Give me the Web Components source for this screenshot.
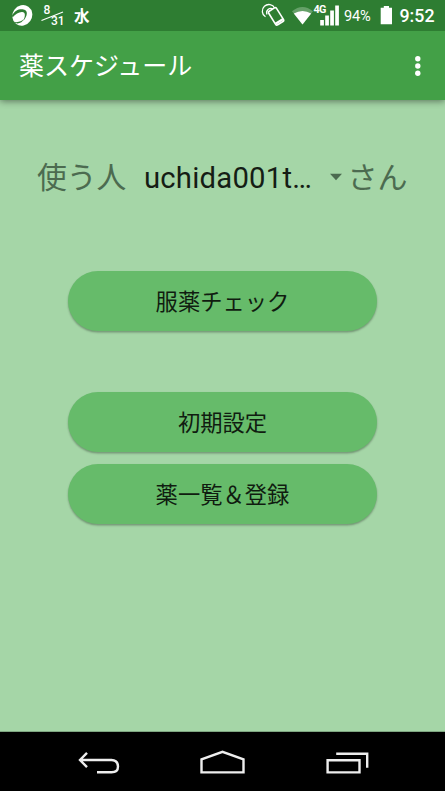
<!DOCTYPE html>
<html lang="ja">
<head>
<meta charset="utf-8">
<title>薬スケジュール</title>
<style>
html,body{margin:0;height:100%;overflow:hidden;background:#a5d6a7}
</style>
</head>
<body>
<medicine-app></medicine-app>
<script>
const define = (name, html) => customElements.define(name, class extends HTMLElement {
  constructor() {
    super();
    this.attachShadow({ mode: 'open' }).innerHTML = html;
  }
});

define('status-bar', `
<style>
:host{display:flex;height:31px;background:#2e7d32;color:#fff;box-sizing:border-box;padding-left:11px;align-items:flex-start;position:relative;z-index:1}
svg{display:block;flex:none}
span{white-space:nowrap;flex:none}
.date{width:23px;height:31px;margin-left:8px;display:grid;font:500 12px/12px Roboto,sans-serif}
.date svg{grid-area:1/1}
.date .m{grid-area:1/1;padding:4px 0 0 2.5px}
.date .d{grid-area:1/1;padding:15px 0 0 10px}
.day{margin:5px 0 0 10px;font:700 15.5px/20px "Noto Sans CJK JP",sans-serif}
.right{display:flex;margin-left:auto;width:184px}
.net{margin-left:1px;display:grid;width:27px}
.net svg,.net span{grid-area:1/1}
.net span{font:700 10.8px/12px Roboto,sans-serif;padding:3.5px 0 0 0;letter-spacing:-.7px}
.pct{margin:6px 0 0 3.5px;width:29px;font:400 14.6px/20px Roboto,sans-serif;letter-spacing:-.2px}
.bat{margin-left:6.5px}
.time{margin:5px 0 0 8px;font:500 17.8px/22px Roboto,sans-serif}
</style>
<svg width="22" height="31" viewBox="0 0 22 31"><ellipse cx="11.3" cy="15.4" rx="9.7" ry="10.6" fill="#fff" transform="rotate(35 11.3 15.4)"/>
<path d="M1 15.5C4 10.5 7.5 8.8 12.5 9.4C17.5 10.2 16.5 16 12.2 21C14.6 16 14.6 12.2 11.2 12C8 11.8 4.5 14 1.5 17.5Z" fill="#2e7d32"/><path d="M2.5 21.8C7 22.8 10.5 21.5 13 18.8C11.5 22.2 8.5 24 5 23.3Z" fill="#2e7d32"/></svg>
<div class="date"><svg width="23" height="31"><path d="M.5 20.5L22 12" stroke="#fff" stroke-width="1.2"/></svg><span class="m">8</span><span class="d">31</span></div>
<span class="day">水</span>
<div class="right">
<svg width="24" height="31" viewBox="0 0 24 31" fill="none" stroke="#fff"><path d="M4.5 16.8A6.6 6.6 0 1 1 13.8 8.2M6 14.5A4.3 4.3 0 0 1 12 9" stroke-width="1.3"/><g transform="rotate(-32 15 17)"><rect x="10.8" y="8.5" width="9.2" height="16" rx="1.5" stroke-width="1.6" fill="#2e7d32"/><path d="M11 22.5h9" stroke-width="2.2"/></g></svg>
<svg style="margin-left:6.5px" width="21" height="31" viewBox="0 0 21 31"><path d="M0 11.3Q10.5 2.5 21 11.3L10.5 24.5Z" fill="#65a068"/><path d="M1.8 13.5Q10.5 8.5 19.2 13.5L10.5 24.5Z" fill="#fff"/></svg>
<div class="net"><svg width="27" height="31" fill="#fff"><rect x="6.2" y="20" width="3.7" height="5.5"/><rect x="11.2" y="15.5" width="3.7" height="10"/><rect x="16.2" y="10.5" width="3.7" height="15"/><rect x="21.2" y="5.5" width="3.7" height="20"/></svg><span>4G</span></div>
<span class="pct">94%</span>
<svg class="bat" width="12" height="31" fill="#fff"><path d="M.7 7.8H3.8V6h5.2V7.8h3V24.3H.7z"/></svg>
<span class="time">9:52</span>
</div>`);

define('app-bar', `
<style>
:host{display:flex;height:69px;background:#43a047;color:#fff;justify-content:space-between;align-items:center;box-sizing:border-box;padding:0 23px 0 19px;position:relative;box-shadow:0 1px 7px rgba(0,0,0,.48)}
h1{font:400 25px/36px "Noto Sans CJK JP",sans-serif;margin:0 0 3px}
</style>
<h1><slot></slot></h1>
<svg width="10" height="24" fill="#fff"><circle cx="5.8" cy="4.7" r="2.7"/><circle cx="5.8" cy="12" r="2.7"/><circle cx="5.8" cy="19.3" r="2.7"/></svg>`);

define('user-picker', `
<style>
:host{display:flex;height:50px;align-items:center;padding:53px 0 0 37px;color:#4c6b50;font:400 29.8px/50px "Noto Sans CJK JP",sans-serif;white-space:nowrap}
.label,.suffix{margin-bottom:6px}
.name{font:400 29.3px/50px Roboto,sans-serif;color:#151d15;margin-left:17.6px;width:186px;letter-spacing:.2px}
svg{flex:none;margin-bottom:2px}
.suffix{margin-left:5.5px;font-size:30px}
</style>
<span class="label">使う人</span><span class="name"><slot></slot></span><svg width="12" height="8" fill="#4c6b50"><path d="M0 .7h12L6 7.2z"/></svg><span class="suffix">さん</span>`);

define('pill-button', `
<style>
:host{display:flex;justify-content:center;width:309px;height:60px;margin-left:68px;border-radius:30px;background:#66bb6a;color:#101c10;box-shadow:0 1.5px 2px rgba(0,0,0,.3)}
span{font:400 22.3px/58px "Noto Sans CJK JP",sans-serif}
</style>
<span><slot></slot></span>`);

define('nav-bar', `
<style>
:host{display:flex;height:59px;background:#000;box-shadow:0 -1px #7fa681;padding-left:78px;gap:80px;box-sizing:border-box}
svg{display:block;flex:none;fill:none;stroke:#eee;stroke-width:2.4}
</style>
<svg width="42" height="59"><path d="M9 20.8L2 28L9 35.2M2 28H33.5Q40 28.5 40 34.5Q40 40.3 33.5 40.3H19"/></svg>
<svg width="46" height="59"><path d="M1.5 40.4V27.3L22.5 19.8L43.5 27.3V40.4Z"/></svg>
<svg width="45" height="59"><path d="M1.6 28.2H33.5V40.4H1.6ZM10.2 21.8H41.2V35.7"/></svg>`);

define('medicine-app', `
<style>
:host{display:flex;flex-direction:column;width:445px;height:791px;background:#a5d6a7}
main{flex:1;display:flex;flex-direction:column}
.check{margin-top:68px}
.setup{margin-top:61px}
.list{margin-top:12px}
</style>
<status-bar></status-bar>
<app-bar>薬スケジュール</app-bar>
<main>
<user-picker>uchida001t…</user-picker>
<pill-button class="check">服薬チェック</pill-button>
<pill-button class="setup">初期設定</pill-button>
<pill-button class="list">薬一覧＆登録</pill-button>
</main>
<nav-bar></nav-bar>`);
</script>
</body>
</html>
